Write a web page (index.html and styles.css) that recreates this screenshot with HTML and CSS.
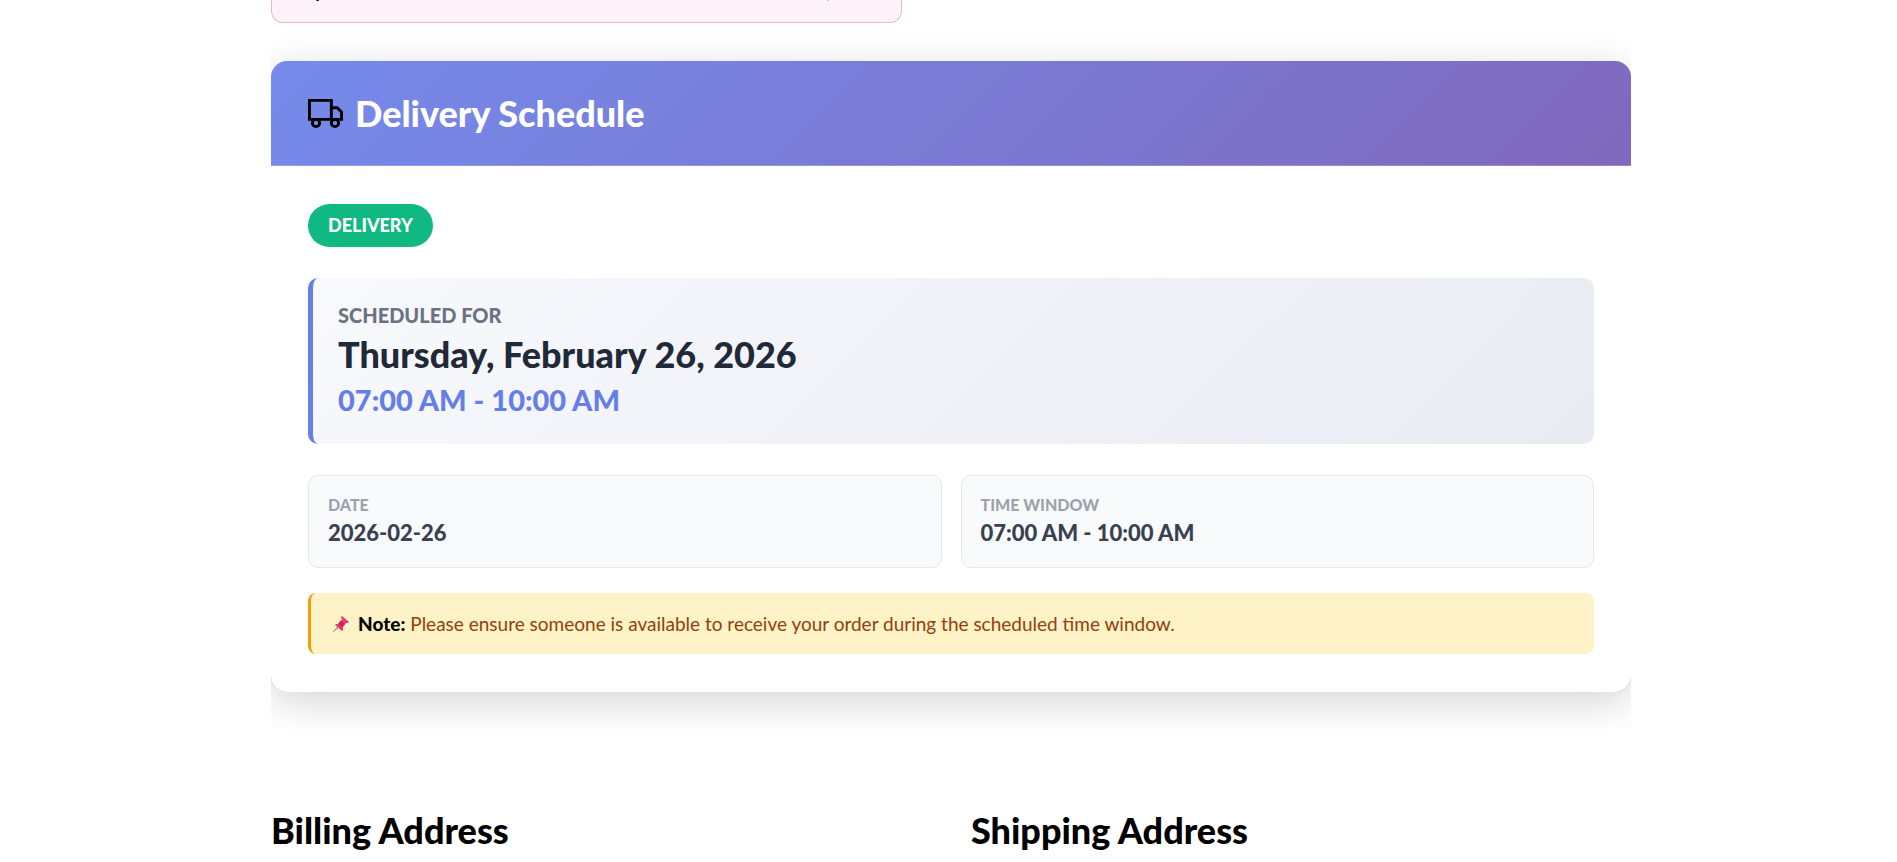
FILE: index.html
```html
<!DOCTYPE html>
<html lang="en">
<head>
<meta charset="utf-8">
<title>Delivery Schedule</title>
<link rel="stylesheet" href="styles.css">
</head>
<body>
<main class="page">
  <div class="summary"><div class="summary-row"><strong>y</strong><span>,</span></div></div>
  <div class="schedule-wrap">
    <section class="card">
      <header class="card-header">
        <svg class="truck" viewBox="0 0 24 24" aria-hidden="true"><path d="M1 3h15v13H1zM16 8h4l3 3v5h-7z"/><circle cx="5.5" cy="18.5" r="2.5"/><circle cx="18.5" cy="18.5" r="2.5"/></svg>
        <h2 class="heading">Delivery Schedule</h2>
      </header>
      <div class="card-body">
        <span class="badge">DELIVERY</span>
        <div class="slot">
          <div class="slot-label">SCHEDULED FOR</div>
          <div class="slot-date">Thursday, February 26, 2026</div>
          <div class="slot-time">07:00 AM - 10:00 AM</div>
        </div>
        <dl class="details">
          <div class="detail"><dt>DATE</dt><dd>2026-02-26</dd></div>
          <div class="detail"><dt>TIME WINDOW</dt><dd>07:00 AM - 10:00 AM</dd></div>
        </dl>
        <p class="note">
          <svg class="pin" viewBox="0 0 18 18" aria-hidden="true"><path d="M1 17l6-7 1 1z" fill="#9aa3ad" stroke="#9aa3ad"/><path d="M10 1l7 6-1 1-2 0-3 4v3l-1 1-7-6 1-1 3 0 3-4-1-3z" fill="#f0396b"/><path d="M9 5l4 4-3 3-4-3z" fill="#c4285a"/></svg>
          <span><strong>Note:</strong> Please ensure someone is available to receive your order during the scheduled time window.</span>
        </p>
      </div>
    </section>
  </div>
  <div class="addresses">
    <h2 class="heading">Billing Address</h2>
    <h2 class="heading">Shipping Address</h2>
  </div>
</main>
</body>
</html>
```
FILE: styles.css
```css
* { box-sizing: border-box; }
body { margin: 0; padding-left: 5px; background: #fff; color: #000; font-family: Lato, "Open Sans", sans-serif; font-size: 19px; }
.page { max-width: 1360px; margin: 0 auto; }
.heading { margin: 0; font-size: 36px; line-height: 42px; font-weight: 900; }
.summary { width: 631px; max-width: 100%; height: 23px; overflow: hidden; background: #fdf2f8; border: 1px solid #efb6cc; border-top: 0; border-radius: 0 0 12px 12px; }
.summary-row { display: flex; justify-content: space-between; margin-top: -21px; padding: 0 70px 0 42px; line-height: 24px; }
.schedule-wrap { overflow: hidden; padding: 38px 0 37px; }
.card { border-radius: 16px; overflow: hidden; background: linear-gradient(135deg, #667eea 0%, #764ba2 100%); box-shadow: 0 10px 40px rgba(0, 0, 0, .17); }
.card-header { display: flex; align-items: center; gap: 12px; padding: 31px 37px; background: rgba(255, 255, 255, .1); border-bottom: 1px solid rgba(255, 255, 255, .2); color: #fff; }
.truck { width: 35px; height: 35px; fill: none; stroke: #000; stroke-width: 2; }
.card-body { display: flex; flex-direction: column; align-items: stretch; padding: 38px 37px; background: #fff; }
.badge { align-self: flex-start; padding: 10px 20px; border-radius: 24px; background: #10b981; color: #fff; font-size: 18px; line-height: 23px; font-weight: 900; }
.slot { margin-top: 31px; padding: 24px 25px; border-left: 5px solid #667eea; border-radius: 10px; background: linear-gradient(135deg, #f8f9fd 0%, #e8ebf2 100%); font-weight: 900; }
.slot-label { color: #6b7280; font-size: 20px; line-height: 26px; }
.slot-date { color: #1f2937; font-size: 36px; line-height: 52px; }
.slot-time { color: #667eea; font-size: 29px; line-height: 40px; }
.details { display: grid; grid-template-columns: 1fr 1fr; gap: 19px; margin: 31px 0 25px; }
.detail { padding: 17px 19px 18px; border: 1px solid #e5e7eb; border-radius: 10px; background: #f9fafb; font-weight: 900; }
.detail dt { color: #9ca3af; font-size: 16px; line-height: 24px; }
.detail dd { margin: 0; color: #374151; font-size: 22px; line-height: 32px; }
.note { display: flex; align-items: center; gap: 8px; margin: 0; padding: 18px 21px; border-left: 3px solid #f59e0b; border-radius: 8px; background: #fef3c7; color: #92400e; line-height: 25px; }
.note strong { color: #000; font-weight: 900; }
.pin { flex: none; width: 18px; height: 18px; }
.addresses { display: grid; grid-template-columns: 1fr 1fr; gap: 40px; padding-top: 80px; }
```
